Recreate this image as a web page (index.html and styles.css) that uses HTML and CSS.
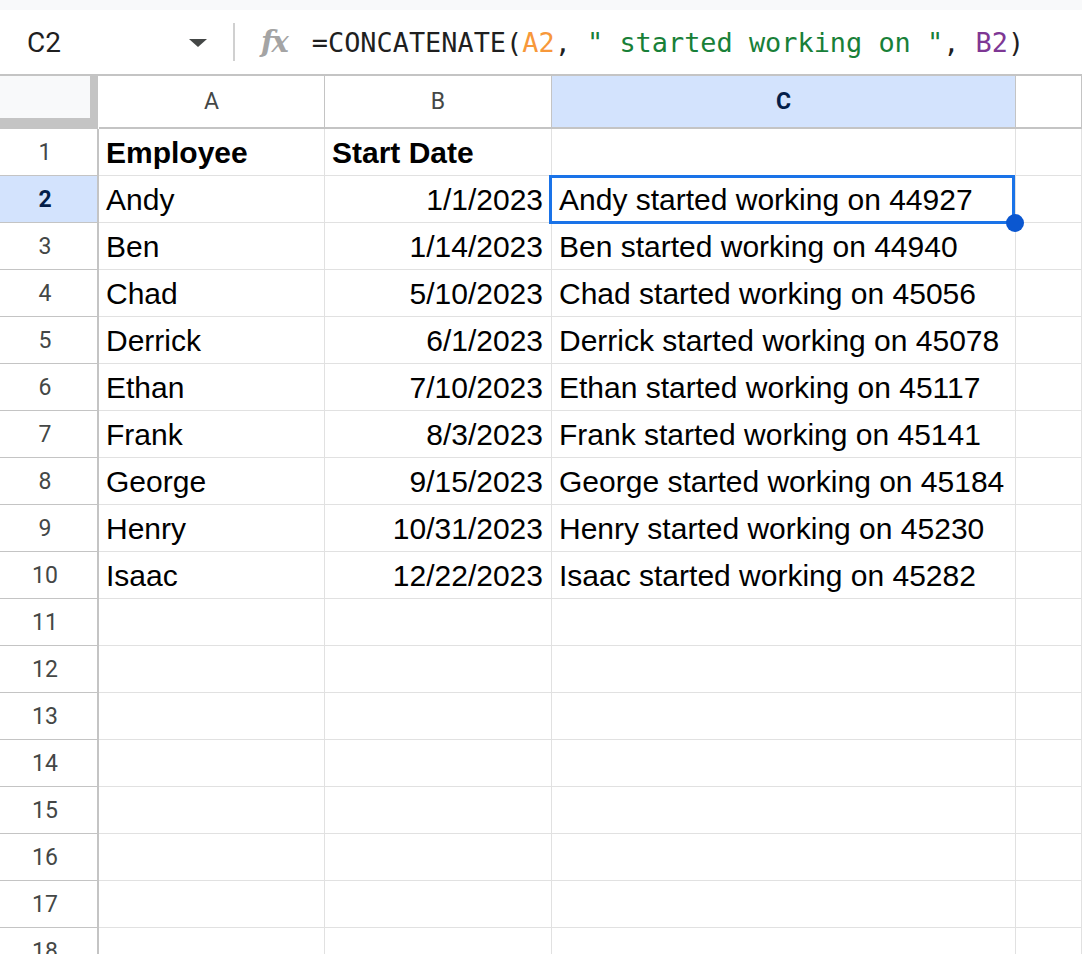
FILE: index.html
```html
<!DOCTYPE html>
<html lang="en">
<head>
    <meta charset="UTF-8">
    <meta name="viewport" content="width=device-width, initial-scale=1.0">
    <title>Sheet</title>
    <link rel="stylesheet" href="styles.css">
</head>
<body>

<div class="top-strip"></div>

<div class="formula-bar">
    <div class="name-box">
        <span class="cell-ref">C2</span>
        <span class="caret"></span>
    </div>
    <div class="divider"></div>
    <span class="fx">fx</span>
    <div class="formula">=CONCATENATE(<span class="ref-a">A2</span>, <span class="str">" started working on "</span>, <span class="ref-b">B2</span>)</div>
</div>

<div class="sheet">
    <!-- column headers -->
    <div class="corner"></div>
    <div class="col-head">A</div>
    <div class="col-head">B</div>
    <div class="col-head selected">C</div>
    <div class="col-head"></div>

    <div class="row-head">1</div>
    <div class="cell bold">Employee</div>
    <div class="cell bold">Start Date</div>
    <div class="cell"></div>
    <div class="cell"></div>

    <div class="row-head selected">2</div>
    <div class="cell">Andy</div>
    <div class="cell num">1/1/2023</div>
    <div class="cell active">Andy started working on 44927<span class="handle"></span></div>
    <div class="cell"></div>

    <div class="row-head">3</div>
    <div class="cell">Ben</div>
    <div class="cell num">1/14/2023</div>
    <div class="cell">Ben started working on 44940</div>
    <div class="cell"></div>

    <div class="row-head">4</div>
    <div class="cell">Chad</div>
    <div class="cell num">5/10/2023</div>
    <div class="cell">Chad started working on 45056</div>
    <div class="cell"></div>

    <div class="row-head">5</div>
    <div class="cell">Derrick</div>
    <div class="cell num">6/1/2023</div>
    <div class="cell">Derrick started working on 45078</div>
    <div class="cell"></div>

    <div class="row-head">6</div>
    <div class="cell">Ethan</div>
    <div class="cell num">7/10/2023</div>
    <div class="cell">Ethan started working on 45117</div>
    <div class="cell"></div>

    <div class="row-head">7</div>
    <div class="cell">Frank</div>
    <div class="cell num">8/3/2023</div>
    <div class="cell">Frank started working on 45141</div>
    <div class="cell"></div>

    <div class="row-head">8</div>
    <div class="cell">George</div>
    <div class="cell num">9/15/2023</div>
    <div class="cell">George started working on 45184</div>
    <div class="cell"></div>

    <div class="row-head">9</div>
    <div class="cell">Henry</div>
    <div class="cell num">10/31/2023</div>
    <div class="cell">Henry started working on 45230</div>
    <div class="cell"></div>

    <div class="row-head">10</div>
    <div class="cell">Isaac</div>
    <div class="cell num">12/22/2023</div>
    <div class="cell">Isaac started working on 45282</div>
    <div class="cell"></div>

    <div class="row-head">11</div><div class="cell"></div><div class="cell"></div><div class="cell"></div><div class="cell"></div>
    <div class="row-head">12</div><div class="cell"></div><div class="cell"></div><div class="cell"></div><div class="cell"></div>
    <div class="row-head">13</div><div class="cell"></div><div class="cell"></div><div class="cell"></div><div class="cell"></div>
    <div class="row-head">14</div><div class="cell"></div><div class="cell"></div><div class="cell"></div><div class="cell"></div>
    <div class="row-head">15</div><div class="cell"></div><div class="cell"></div><div class="cell"></div><div class="cell"></div>
    <div class="row-head">16</div><div class="cell"></div><div class="cell"></div><div class="cell"></div><div class="cell"></div>
    <div class="row-head">17</div><div class="cell"></div><div class="cell"></div><div class="cell"></div><div class="cell"></div>
    <div class="row-head">18</div><div class="cell"></div><div class="cell"></div><div class="cell"></div><div class="cell"></div>
</div>

</body>
</html>
```

FILE: styles.css
```css
body {
    margin: 0;
    height: 954px;
    overflow: hidden;
    background-color: #fff;
    font-family: "Liberation Sans", Arial, sans-serif;
    color: #000;
}
.top-strip {
    height: 10px;
    background-color: #f8f9fa;
}
.formula-bar {
    height: 64px;
    display: flex;
    align-items: center;
    border-bottom: 2px solid #c4c4c4;
}
.name-box {
    width: 207px;
    padding-left: 27px;
    display: flex;
    align-items: center;
    justify-content: space-between;
    box-sizing: border-box;
}
.cell-ref {
    font-family: Roboto, sans-serif;
    font-size: 28px;
    color: #1f1f1f;
}
.caret {
    width: 0;
    height: 0;
    border-left: 9px solid transparent;
    border-right: 9px solid transparent;
    border-top: 8px solid #444746;
    margin-top: 2px;
}
.divider {
    width: 2px;
    height: 38px;
    background-color: #d0d0d0;
    margin-left: 26px;
}
.fx {
    font-family: "DejaVu Serif", serif;
    font-style: italic;
    font-weight: bold;
    font-size: 29px;
    color: #a4a4a4;
    margin-left: 26px;
    letter-spacing: -2px;
}
.formula {
    font-family: "DejaVu Sans Mono", monospace;
    font-size: 26.9px;
    color: #1f1f1f;
    margin-left: 25px;
    white-space: pre;
}
.ref-a {
    color: #f7983a;
}
.str {
    color: #188038;
}
.ref-b {
    color: #7e3794;
}
.sheet {
    display: grid;
    grid-template-columns: 99px 226px 227px 464px 1fr;
    grid-auto-rows: 47px;
    grid-template-rows: 53px;
}
.corner {
    background-color: #f8f9fa;
    border-right: 8px solid #c4c4c4;
    border-bottom: 11px solid #c4c4c4;
    margin-right: 1px;
}
.col-head {
    border-right: 1px solid #c4c4c4;
    border-bottom: 2px solid #c4c4c4;
    font-family: Roboto, sans-serif;
    font-size: 23px;
    color: #444746;
    display: flex;
    align-items: center;
    justify-content: center;
}
.col-head:last-child {
    border-right: none;
}
.col-head.selected,
.row-head.selected {
    background-color: #d3e3fd;
    color: #041e49;
    font-weight: bold;
}
.row-head {
    border-right: 2px solid #c4c4c4;
    border-bottom: 1px solid #c4c4c4;
    padding-right: 7px;
    font-family: Roboto, sans-serif;
    font-size: 23px;
    color: #444746;
    display: flex;
    align-items: center;
    justify-content: center;
}
.cell {
    border-right: 1px solid #e1e1e1;
    border-bottom: 1px solid #e1e1e1;
    font-size: 30px;
    padding: 1px 8px 0 7px;
    display: flex;
    align-items: center;
    white-space: nowrap;
}
.cell.bold {
    font-weight: bold;
}
.cell.num {
    justify-content: flex-end;
}
.cell.active {
    position: relative;
}
.cell.active::after {
    content: '';
    position: absolute;
    left: -3px;
    top: -1px;
    right: 0;
    bottom: -2px;
    border: 3px solid #1a73e8;
}
.handle {
    position: absolute;
    right: -9px;
    bottom: -10px;
    width: 18px;
    height: 18px;
    border-radius: 50%;
    background-color: #0b57d0;
    z-index: 2;
}
```
